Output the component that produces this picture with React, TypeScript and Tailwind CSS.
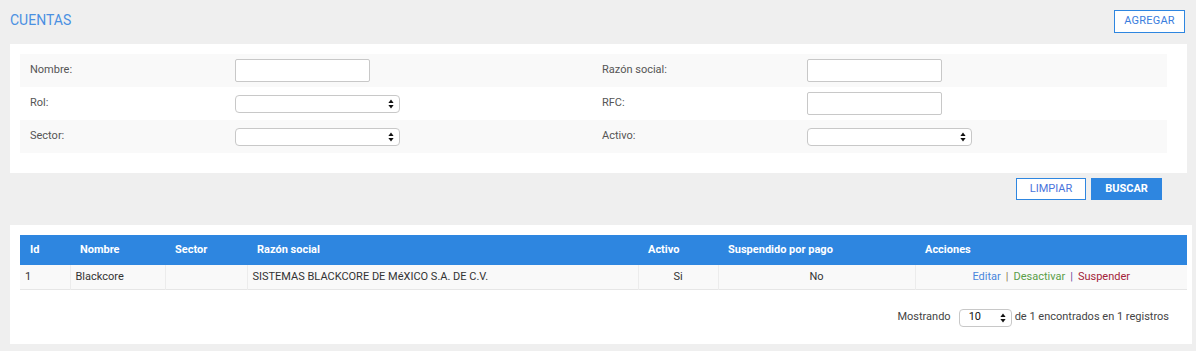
import React from "react";

const Arrows = () => (
  <svg width="6" height="10" viewBox="0 0 6 10" className="block">
    <path d="M3 0.5 L5.6 4 L0.4 4 Z" fill="#111" />
    <path d="M3 9.5 L5.6 6 L0.4 6 Z" fill="#111" />
  </svg>
);

const FakeSelect = ({ w, value }: { w: string; value?: string }) => (
  <div
    className={`${w} h-[18px] border border-[#c8c8c8] rounded-[4px] bg-white flex items-center justify-between pl-[9px] pr-[5px] text-[11px] text-[#111]`}
  >
    <span>{value ?? ""}</span>
    <Arrows />
  </div>
);

const Input = () => (
  <div className="w-[135px] h-[23px] border border-[#c8c8c8] rounded-[2px] bg-white" />
);

const Row = ({
  shaded,
  l1,
  c1,
  l2,
  c2,
}: {
  shaded: boolean;
  l1: string;
  c1: React.ReactNode;
  l2: string;
  c2: React.ReactNode;
}) => (
  <div className={`flex h-[33px] items-center ${shaded ? "bg-[#f9f9f9]" : "bg-white"}`}>
    <div className="w-[205px] pl-[10px] text-[11px] text-[#555]">{l1}</div>
    <div className="w-[367px] pl-[10px]">{c1}</div>
    <div className="w-[205px] pl-[10px] text-[11px] text-[#555]">{l2}</div>
    <div className="flex-1 pl-[10px]">{c2}</div>
  </div>
);

export default function App() {
  return (
    <div
      className="w-[1196px] h-[351px] bg-[#efefef] overflow-hidden"
      style={{ fontFamily: "Roboto, 'Liberation Sans', sans-serif" }}
    >
      {/* Header */}
      <div className="h-[44px] flex items-start justify-between pl-[10px] pr-[11px]">
        <div className="text-[14px] text-[#4a90e2] mt-[11px] leading-[18px]">CUENTAS</div>
        <button className="mt-[10px] w-[71px] h-[23px] border border-[#2e86e0] bg-white text-[11px] text-[#3b7ddd] tracking-[0.2px]">
          AGREGAR
        </button>
      </div>

      {/* Filters */}
      <div className="ml-[10px] w-[1177px] bg-white pl-[10px] pr-[20px] pt-[10px] pb-[20px]">
        <Row shaded l1="Nombre:" c1={<Input />} l2="Razón social:" c2={<Input />} />
        <Row shaded={false} l1="Rol:" c1={<FakeSelect w="w-[165px]" />} l2="RFC:" c2={<Input />} />
        <Row shaded l1="Sector:" c1={<FakeSelect w="w-[165px]" />} l2="Activo:" c2={<FakeSelect w="w-[165px]" />} />
      </div>

      {/* Buttons */}
      <div className="flex justify-end gap-[5px] pr-[34px] mt-[5px]">
        <button className="w-[70px] h-[22px] border border-[#2e86e0] bg-white text-[11px] text-[#4a74dc]">
          LIMPIAR
        </button>
        <button className="w-[71px] h-[22px] bg-[#2e86e0] text-white text-[11px] font-bold">BUSCAR</button>
      </div>

      {/* Table panel */}
      <div className="ml-[10px] w-[1182px] mt-[25px] bg-white pl-[10px] pt-[10px] pb-[17px]">
        <table className="table-fixed border-collapse w-[1167px] text-[11px]">
          <colgroup>
            <col className="w-[50px]" />
            <col className="w-[95px]" />
            <col className="w-[82px]" />
            <col className="w-[391px]" />
            <col className="w-[80px]" />
            <col className="w-[197px]" />
            <col className="w-[272px]" />
          </colgroup>
          <thead>
            <tr className="bg-[#2e86e0] text-white h-[30px]">
              {["Id", "Nombre", "Sector", "Razón social", "Activo", "Suspendido por pago", "Acciones"].map((h) => (
                <th key={h} className="text-left font-bold pl-[10px] p-0">
                  {h}
                </th>
              ))}
            </tr>
          </thead>
          <tbody>
            <tr className="bg-[#f9f9f9] h-[24px] text-[#333] border-b border-[#e6e6e6]">
              <td className="pl-[5px]">1</td>
              <td className="pl-[5px] border-l border-[#ececec]">Blackcore</td>
              <td className="pl-[5px] border-l border-[#ececec]"></td>
              <td className="pl-[5px] border-l border-[#ececec]">SISTEMAS BLACKCORE DE MéXICO S.A. DE C.V.</td>
              <td className="text-center border-l border-[#ececec]">Si</td>
              <td className="text-center border-l border-[#ececec]">No</td>
              <td className="text-center border-l border-[#ececec]">
                <span className="text-[#4a86dc]">Editar</span>
                <span className="text-[#8a7a50] mx-[5px]">|</span>
                <span className="text-[#5a9e48]">Desactivar</span>
                <span className="text-[#6a4a9a] mx-[5px]">|</span>
                <span className="text-[#a3243a]">Suspender</span>
              </td>
            </tr>
          </tbody>
        </table>

        <div className="w-[1167px] mt-[19px] flex justify-end items-center pr-[18px] text-[11px] text-[#444]">
          <span className="mr-[8px]">Mostrando</span>
          <FakeSelect w="w-[53px]" value="10" />
          <span className="ml-[3px]">de 1 encontrados en 1 registros</span>
        </div>
      </div>
    </div>
  );
}
